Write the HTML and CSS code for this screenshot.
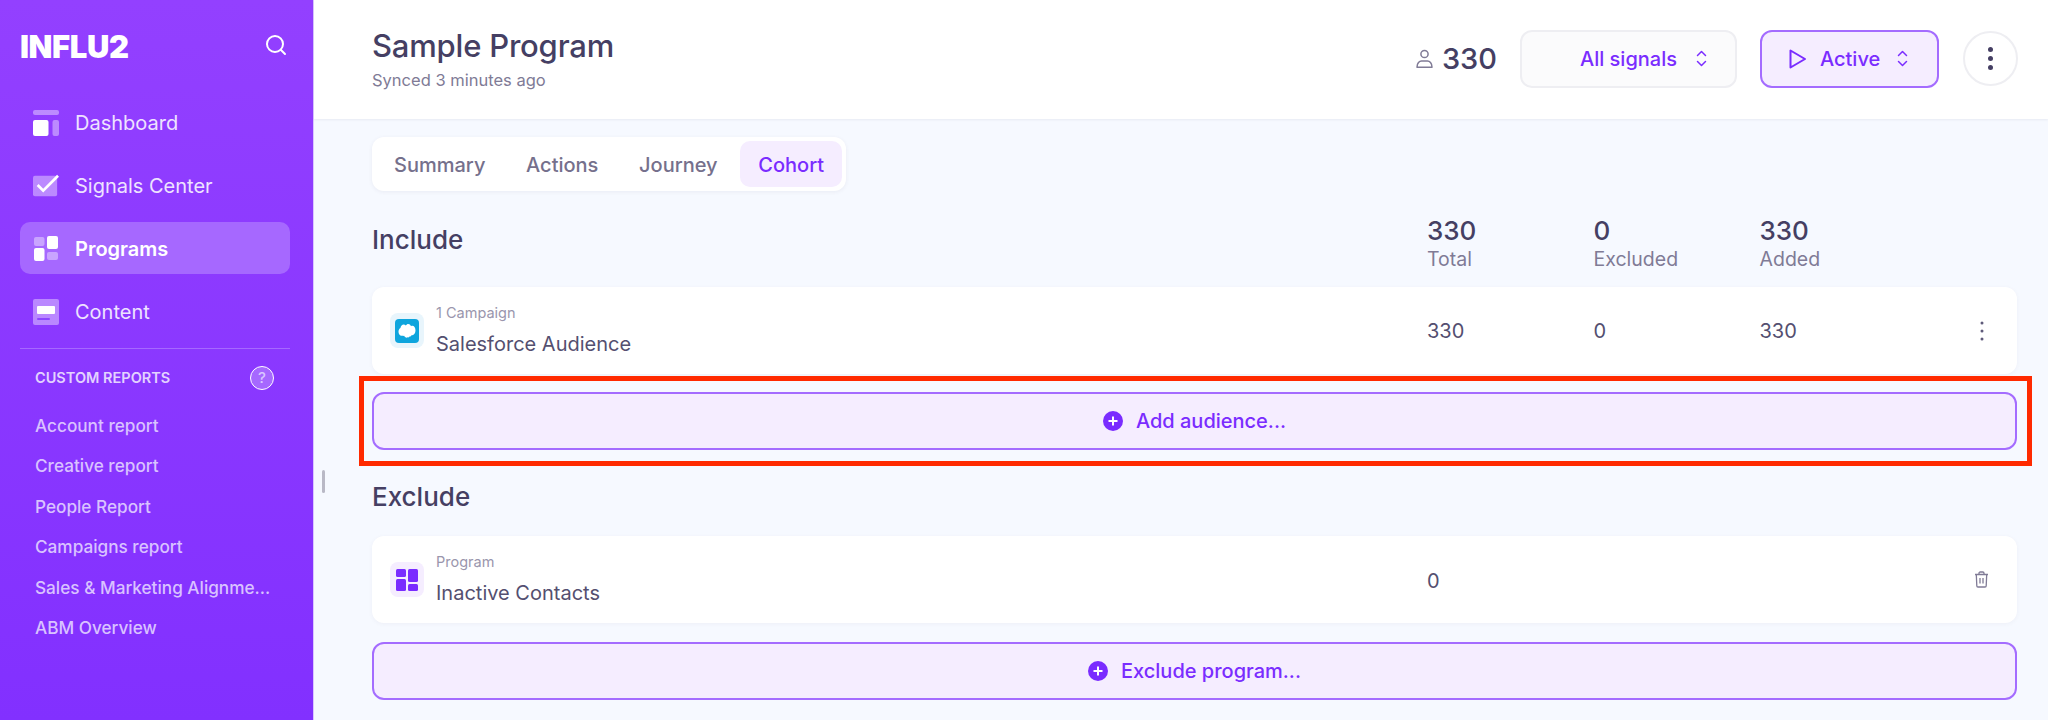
FILE: index.html
```html
<!DOCTYPE html>
<html lang="en">
<head>
<meta charset="utf-8">
<title>Sample Program</title>
<link rel="stylesheet" href="styles.css">
</head>
<body>
<div class="app">
  <aside class="sidebar">
    <div class="brand">
      <span class="logo">INFLU2</span>
      <svg class="search" viewBox="0 0 22 22" fill="none" stroke="#fff" stroke-width="2" stroke-linecap="round"><circle cx="10" cy="10" r="8"/><path d="M16 16l4 4"/></svg>
    </div>
    <nav class="nav">
      <a class="nav-item">
        <svg class="nav-icon" viewBox="0 0 26 26"><rect x="0" y="0" width="26" height="5" rx="2" fill="#fff" opacity=".4"/><rect x="0" y="10" width="15.500" height="16" rx="2" fill="#fff"/><rect x="19.500" y="10" width="6.500" height="16" rx="2" fill="#fff" opacity=".4"/></svg>
        <span>Dashboard</span>
      </a>
      <a class="nav-item">
        <svg class="nav-icon" viewBox="0 0 28 26"><rect x="0" y="2" width="26" height="22" rx="2" fill="#fff" opacity=".4"/><path d="M5 12l6 6L27 2" fill="none" stroke="#fff" stroke-width="3"/></svg>
        <span>Signals Center</span>
      </a>
      <a class="nav-item is-active">
        <svg class="nav-icon" viewBox="0 0 26 26"><rect x="1" y="1" width="10.500" height="9" rx="2" fill="#fff" opacity=".4"/><rect x="14" y="0" width="11" height="13" rx="2" fill="#fff"/><rect x="1" y="12" width="10.500" height="13" rx="2" fill="#fff"/><rect x="14" y="16" width="11" height="8" rx="2" fill="#fff" opacity=".4"/></svg>
        <span>Programs</span>
      </a>
      <a class="nav-item">
        <svg class="nav-icon" viewBox="0 0 26 26"><rect x="0" y="0" width="26" height="26" rx="2" fill="#fff" opacity=".4"/><rect x="4" y="7" width="18" height="8" rx="1" fill="#fff"/><rect x="4" y="19" width="13" height="2" rx="1" fill="#7a2cff" opacity=".7"/></svg>
        <span>Content</span>
      </a>
    </nav>
    <div class="divider"></div>
    <div class="reports-head">
      <span>CUSTOM REPORTS</span>
      <span class="help">?</span>
    </div>
    <ul class="reports">
      <li>Account report</li>
      <li>Creative report</li>
      <li>People Report</li>
      <li>Campaigns report</li>
      <li>Sales &amp; Marketing Alignme...</li>
      <li>ABM Overview</li>
    </ul>
  </aside>
  <main class="main">
    <span class="handle"></span>
    <header class="topbar">
      <div class="title-block">
        <h1>Sample Program</h1>
        <p>Synced 3 minutes ago</p>
      </div>
      <div class="actions">
        <div class="count">
          <svg class="user-icon" viewBox="0 0 17 20" fill="none" stroke="#807b96" stroke-width="1.500"><circle cx="8.500" cy="5" r="3.600"/><path d="M1 18.200c0-4 2.500-6.200 4.500-6.200h6c2 0 4.500 2.200 4.500 6.200z" stroke-linejoin="round"/></svg>
          <span>330</span>
        </div>
        <button class="select select-signals">
          <span>All signals</span>
          <svg class="updown" viewBox="0 0 11 17" fill="none" stroke="#7a2cff" stroke-width="1.500" stroke-linecap="round" stroke-linejoin="round"><path d="M1.500 5.500l4-4 4 4M1.500 11.500l4 4 4-4"/></svg>
        </button>
        <button class="select select-active">
          <svg class="play" viewBox="0 0 17 20" fill="none" stroke="#7a2cff" stroke-width="2" stroke-linejoin="round"><path d="M1.500 1.500v17L16 10z"/></svg>
          <span>Active</span>
          <svg class="updown" viewBox="0 0 11 17" fill="none" stroke="#7a2cff" stroke-width="1.500" stroke-linecap="round" stroke-linejoin="round"><path d="M1.500 5.500l4-4 4 4M1.500 11.500l4 4 4-4"/></svg>
        </button>
        <button class="more"><i></i><i></i><i></i></button>
      </div>
    </header>
    <div class="content">
      <div class="tabs">
        <span class="tab">Summary</span>
        <span class="tab">Actions</span>
        <span class="tab">Journey</span>
        <span class="tab is-active">Cohort</span>
      </div>

      <div class="cols section-head">
        <h2>Include</h2>
        <div class="stat"><b>330</b><span>Total</span></div>
        <div class="stat"><b>0</b><span>Excluded</span></div>
        <div class="stat"><b>330</b><span>Added</span></div>
      </div>

      <div class="cols row">
        <div class="row-name">
          <span class="icon-box icon-sf">
            <svg viewBox="0 0 24 24"><rect width="24" height="24" rx="4" fill="#0ea5dd"/><path transform="translate(1.800 -3.600) scale(.85 1.200)" d="M5.500 17c-2 0-3.500-1.500-3.500-3.300 0-1.500 1-2.800 2.300-3.200C4.700 8.600 6.300 7.500 8 7.500c1 0 1.900.4 2.600 1 .7-.8 1.700-1.300 2.900-1.300 1.400 0 2.600.7 3.200 1.800.5-.2 1-.3 1.500-.3 2.100 0 3.800 1.700 3.800 3.900s-1.700 3.900-3.800 3.900h-.9c-.5.7-1.400 1.100-2.300 1-.6.700-1.500 1-2.400.8-.7.4-1.600.4-2.400 0-.7-.3-1.200-.8-1.500-1.400-.4.2-.8.2-1.200.1z" fill="#fff"/></svg>
          </span>
          <div class="row-text"><small>1 Campaign</small><span>Salesforce Audience</span></div>
        </div>
        <span class="val">330</span>
        <span class="val">0</span>
        <span class="val">330</span>
        <svg class="row-end row-kebab" viewBox="0 0 4 20" fill="#5e5a7a"><circle cx="2" cy="2" r="1.500"/><circle cx="2" cy="10" r="1.500"/><circle cx="2" cy="18" r="1.500"/></svg>
      </div>

      <div class="add-wrap">
        <button class="add">
          <svg class="plus" viewBox="0 0 20 20"><circle cx="10" cy="10" r="10" fill="#7a2cff"/><path d="M10 5.500v9M5.500 10h9" stroke="#fff" stroke-width="2"/></svg>
          <span>Add audience...</span>
        </button>
        <span class="highlight"></span>
      </div>

      <h2 class="exclude-head">Exclude</h2>

      <div class="cols row">
        <div class="row-name">
          <span class="icon-box icon-prog">
            <svg viewBox="0 0 22 22" fill="#7a2cff"><rect x="0" y="0" width="10" height="8" rx="1.500"/><rect x="12" y="0" width="10" height="13" rx="1.500"/><rect x="0" y="10" width="10" height="12" rx="1.500"/><rect x="12" y="15" width="10" height="7" rx="1.500"/></svg>
          </span>
          <div class="row-text"><small>Program</small><span>Inactive Contacts</span></div>
        </div>
        <span class="val val-wide">0</span>
        <svg class="row-end row-trash" viewBox="0 0 15 17" fill="none" stroke="#807b96" stroke-width="1.300" stroke-linejoin="round"><path d="M1 3.500h13M5 3.500V2.200C5 1.500 5.500 1 6.200 1h2.600c.7 0 1.200.5 1.200 1.200v1.300M2.300 3.500l.5 11.300c0 .7.600 1.200 1.200 1.200h7c.6 0 1.200-.5 1.200-1.200l.5-11.300M6 7v5.500M9 7v5.500"/></svg>
      </div>

      <button class="add add-last">
        <svg class="plus" viewBox="0 0 20 20"><circle cx="10" cy="10" r="10" fill="#7a2cff"/><path d="M10 5.500v9M5.500 10h9" stroke="#fff" stroke-width="2"/></svg>
        <span>Exclude program...</span>
      </button>
    </div>
  </main>
</div>
</body>
</html>
```
FILE: styles.css
```css
* { box-sizing: border-box; }
html, body { margin: 0; height: 720px; overflow: hidden; }
body { font-family: Inter, "Noto Sans", "Liberation Sans", sans-serif; color: #453f63; background: #f6f9ff; }
h1, h2, p, ul { margin: 0; padding: 0; }
button { font: inherit; cursor: pointer; }

.app { display: flex; height: 720px; }

/* Sidebar */
.sidebar {
  width: 314px; flex: none; padding: 0 23px 0 20px;
  background: linear-gradient(180deg, #9340ff 0%, #8230ff 100%);
  border-right: 1px solid #d9c6ff;
}
.brand { height: 96px; display: flex; align-items: flex-start; justify-content: space-between; padding: 32px 3px 0 0; }
.logo { font-size: 31px; line-height: 30px; font-weight: 900; color: #fff; letter-spacing: -0.4px; }
.search { width: 22px; height: 22px; margin-top: 2px; }
.nav { display: flex; flex-direction: column; gap: 11px; }
.nav-item { height: 52px; display: flex; align-items: center; gap: 16px; padding: 1px 0 0 13px; border-radius: 10px; color: #eee3ff; font-size: 20px; }
.nav-item.is-active { background: #a668ff; color: #fff; font-weight: 600; }
.nav-icon { width: 26px; height: 26px; flex: none; }
.divider { height: 1px; background: #a668ff; margin-top: 11px; }
.reports-head { display: flex; align-items: center; justify-content: space-between; padding: 16px 16px 0 15px; height: 41px; font-size: 14.500px; font-weight: 600; color: #e3d2ff; }
.help { width: 24px; height: 24px; border: 1.500px solid #fff; border-radius: 50%; background: #a668ff; display: flex; align-items: center; justify-content: center; font-size: 15px; font-weight: 500; color: #d9c6ff; }
.reports { list-style: none; margin-top: 16px; padding-left: 15px; font-size: 17.200px; font-weight: 500; color: #d9c2ff; }
.reports li { height: 40.400px; line-height: 40.400px; white-space: nowrap; }

/* Main */
.main { flex: 1; min-width: 0; position: relative; }
.handle { position: absolute; left: 8px; top: 470px; width: 3px; height: 23px; background: #b9b9c6; border-radius: 2px; }
.topbar { height: 119px; background: #fff; box-shadow: 0 1px 2px rgba(69, 63, 99, .08); display: flex; align-items: center; justify-content: space-between; padding: 0 30px 2px 58px; position: relative; }
.title-block h1 { font-size: 31px; line-height: 40px; font-weight: 500; letter-spacing: -0.2px; }
.title-block p { font-size: 16.500px; line-height: 24px; color: #807b96; margin-top: 2px; }
.actions { display: flex; align-items: center; }
.count { display: flex; align-items: center; gap: 9px; font-size: 29px; font-weight: 500; margin-right: 23px; }
.user-icon { width: 17px; height: 20px; }
.select { height: 58px; border-radius: 12px; display: flex; align-items: center; font-size: 20px; font-weight: 500; color: #7a2cff; }
.select-signals { width: 217px; background: #fbfbfc; border: 2px solid #eeeef2; padding: 0 0 0 58px; gap: 19px; margin-right: 23px; }
.select-active { width: 179px; background: #f5edff; border: 2px solid #a46cff; padding: 0 0 0 27px; gap: 14px; margin-right: 24px; }
.select-active .updown { margin-left: 3px; }
.updown { width: 11px; height: 17px; flex: none; }
.play { width: 17px; height: 20px; flex: none; }
.more { width: 55px; height: 55px; border-radius: 50%; background: #fff; border: 2px solid #eeeef2; display: flex; flex-direction: column; align-items: center; justify-content: center; gap: 4px; padding: 0; }
.more i { width: 5px; height: 5px; border-radius: 50%; background: #453f63; }

.content { padding: 18px 31px 0 58px; }
.tabs { display: inline-flex; gap: 4.700px; padding: 4px; background: #fff; border-radius: 12px; height: 54px; box-shadow: 0 1px 4px rgba(69, 63, 99, .07); vertical-align: top; }
.tab { display: flex; align-items: center; padding: 1px 18px 0; border-radius: 10px; font-size: 20px; font-weight: 500; color: #75708c; }
.tab.is-active { background: #f5edff; color: #7a2cff; }

.cols { display: grid; grid-template-columns: 1055px 166.500px 166px 1fr auto; }
.section-head { margin-top: 24px; }
h2 { font-size: 26px; line-height: 50px; font-weight: 500; }
.stat { display: flex; flex-direction: column; }
.stat b { font-size: 26px; line-height: 32px; font-weight: 500; }
.stat span { font-size: 19.500px; line-height: 24px; color: #807b96; }

.row { margin-top: 16px; height: 87px; background: #fff; border-radius: 12px; align-items: center; box-shadow: 0 1px 4px rgba(69, 63, 99, .05); }
.row-name { display: flex; align-items: center; padding-left: 18px; gap: 12px; }
.icon-box { width: 34px; height: 35px; border-radius: 8px; display: flex; align-items: center; justify-content: center; flex: none; }
.icon-sf { background: #e8f5fc; }
.icon-sf svg { width: 24px; height: 24px; }
.icon-prog { background: #f5edff; }
.icon-prog svg { width: 22px; height: 22px; }
.row-text { display: flex; flex-direction: column; padding-top: 2px; }
.row-text small { font-size: 14.500px; line-height: 22px; color: #9a96ad; }
.row-text span { font-size: 20px; line-height: 36px; margin-top: 2px; color: #544f70; }
.val { font-size: 20px; color: #544f70; }
.val-wide { grid-column: 2 / 5; padding-top: 3px; }
.row-end { grid-column: 5; }
.row-kebab { width: 4px; height: 20px; margin-right: 33px; }
.row-trash { width: 15px; height: 17px; margin-right: 28px; }

.add-wrap { position: relative; margin-top: 18px; }
.add { width: 100%; height: 58px; display: flex; align-items: center; justify-content: center; gap: 13px; background: #f5edff; border: 2px solid #a46cff; border-radius: 12px; font-size: 20px; font-weight: 500; color: #7a2cff; padding: 0; }
.add-last { margin-top: 19px; }
.plus { width: 20px; height: 20px; flex: none; }
.highlight { position: absolute; top: -16px; bottom: -16px; left: -13px; right: -15px; border: 5px solid #ff2a00; pointer-events: none; }
.exclude-head { margin-top: 22px; margin-bottom: -2px; }
```
